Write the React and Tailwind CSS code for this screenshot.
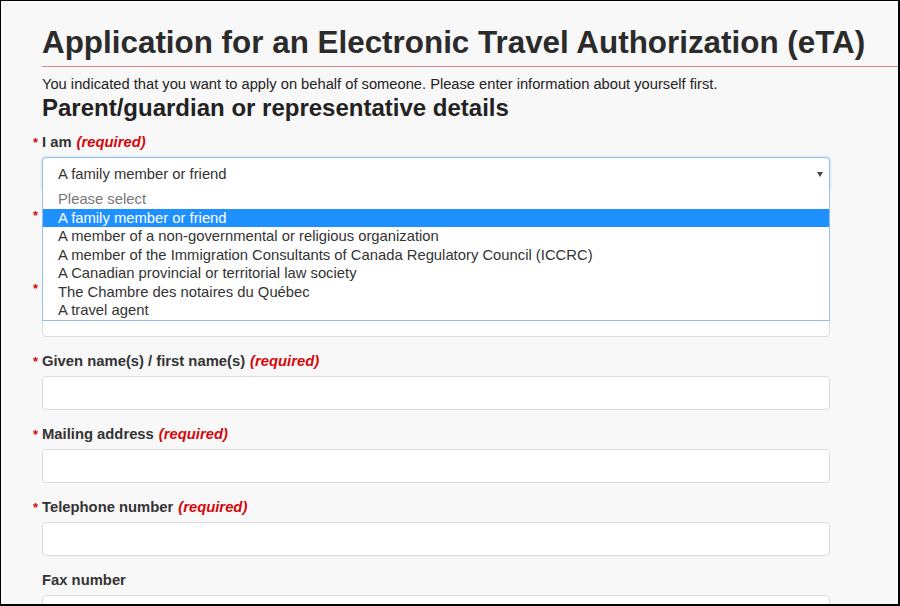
import React from "react";

const options = [
  "Please select",
  "A family member or friend",
  "A member of a non-governmental or religious organization",
  "A member of the Immigration Consultants of Canada Regulatory Council (ICCRC)",
  "A Canadian provincial or territorial law society",
  "The Chambre des notaires du Québec",
  "A travel agent",
];

const Label = ({ text, required = true }) => (
  <div className="h-[20px] flex items-center text-[14.8px] font-bold text-[#333] leading-[20px]">
    {required && (
      <span className="-ml-[9px] w-[9px] pt-[3px] text-[13px] text-[#d3080c] font-bold self-start leading-[16px]">
        *
      </span>
    )}
    <span>{text}</span>
    {required && (
      <span className="ml-[5px] italic text-[#d3080c]">(required)</span>
    )}
  </div>
);

const TextField = ({ label, required = true }) => (
  <div className="mb-[14px]">
    <Label text={label} required={required} />
    <div className="mt-[5px] h-[34px] w-[788px] rounded-[4px] border border-[#dcdcdc] bg-white" />
  </div>
);

export default function App() {
  const selected = 1;

  return (
    <div
      className="h-[606px] w-[900px] overflow-hidden border-t border-l border-r-2 border-b-2 border-black bg-[#f8f8f8] text-[#333]"
      style={{ fontFamily: '"Liberation Sans", Arial, sans-serif' }}
    >
      <div className="pl-[41px] pt-[25px]">
        <h1 className="border-b border-[#d08a8e] pb-[6px] text-[31.4px] font-bold leading-[34px] text-[#2b2b2b]">
          Application for an Electronic Travel Authorization (eTA)
        </h1>
        <p className="mt-[8px] text-[14.7px] leading-[18px] text-[#222]">
          You indicated that you want to apply on behalf of someone. Please
          enter information about yourself first.
        </p>
        <h2 className="mt-[1px] text-[24px] font-bold leading-[27px] text-[#222]">
          Parent/guardian or representative details
        </h2>

        <div className="mt-[11px]">
          {/* I am select, opened */}
          <div className="mb-[14px]">
            <Label text="I am" />
            <div className="relative mt-[5px] w-[788px]">
              <div className="flex h-[34px] items-center justify-between rounded-t-[4px] border border-[#98bde8] bg-white pl-[15px] pr-[6px] text-[14.8px] text-[#333] shadow-[0_0_3px_rgba(102,175,233,0.45)]">
                <span>A family member or friend</span>
                <svg width="6" height="5" viewBox="0 0 6 5">
                  <path d="M0 0H6L3 5Z" fill="#444" />
                </svg>
              </div>
              <ul className="absolute left-0 top-[33px] z-10 w-[788px] border border-t-0 border-[#98bde8] bg-white py-0 text-[14.8px]">
                {options.map((o, i) => (
                  <li
                    key={o}
                    className={
                      i === selected
                        ? "h-[18.5px] bg-[#1e90ff] pl-[15px] leading-[18.5px] text-white"
                        : i === 0
                        ? "h-[18.5px] pl-[15px] leading-[18.5px] text-[#777]"
                        : "h-[18.5px] pl-[15px] leading-[18.5px] text-[#333]"
                    }
                  >
                    {o}
                  </li>
                ))}
              </ul>
            </div>
          </div>

          {/* fields hidden under the open list */}
          <TextField label="Family name(s)" />
          <TextField label="Date of birth" />

          <TextField label="Given name(s) / first name(s)" />
          <TextField label="Mailing address" />
          <TextField label="Telephone number" />
          <TextField label="Fax number" required={false} />
        </div>
      </div>
    </div>
  );
}
